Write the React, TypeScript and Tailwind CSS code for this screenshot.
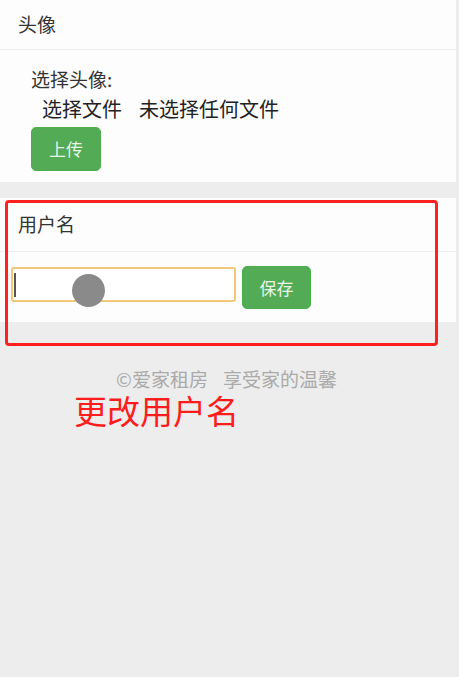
export default function App() {
  return (
    <div
      className="relative min-h-[677px] bg-[#ededed] text-[#333]"
      style={{ fontFamily: '"Noto Sans CJK SC", "Noto Sans", sans-serif' }}
    >
      {/* 头像 panel */}
      <div className="mr-[3px] bg-[#fdfdfd]">
        <div className="flex h-[50px] items-center border-b border-[#eeeeee] pl-[18px] text-[19px]">头像</div>
        <div className="pl-[31px] pt-[15px] pb-[11px]">
          <div className="text-[19px] leading-[28px]">选择头像:</div>
          <div className="mt-[2px] flex gap-[17px] pl-[11px] text-[20px] leading-[28px] text-[#222]">
            <span>选择文件</span>
            <span>未选择任何文件</span>
          </div>
          <button className="mt-[4px] flex h-[44px] w-[70px] items-center justify-center rounded-[5px] border border-[#4cae4c] bg-[#53ab56] text-[17px] text-[#e8f5e8]">
            上传
          </button>
        </div>
      </div>

      {/* 用户名 panel */}
      <div className="mt-[16px] mr-[3px] bg-[#fdfdfd]">
        <div className="flex h-[54px] items-center border-b border-[#eeeeee] pl-[18px] text-[19px]">用户名</div>
        <div className="flex items-start gap-[6px] pl-[11px] pt-[14px] pb-[13px]">
          <div className="mt-[1px] h-[35px] w-[225px] rounded-[3px] border-2 border-[#f1c77a] bg-white">
            <div className="ml-[1px] mt-[4px] h-[24px] w-[2px] bg-[#555]" />
          </div>
          <button className="flex h-[43px] w-[69px] items-center justify-center rounded-[5px] border border-[#4cae4c] bg-[#53ab56] text-[17px] text-[#e8f5e8]">
            保存
          </button>
        </div>
      </div>

      <div className="mt-[45px] flex justify-center gap-[15px] text-[19px] leading-[23px] text-[#aaaaaa]">
        <span className="-ml-[6px]">©爱家租房</span>
        <span>享受家的温馨</span>
      </div>
      <div className="mt-[3px] pl-[74px] text-[33px] leading-[34px] text-[#ff1c1c]">更改用户名</div>

      {/* annotation box */}
      <div className="absolute left-[5px] top-[200px] h-[146px] w-[433px] rounded-[4px] border-[3px] border-[#ff2020]" />
      {/* touch indicator */}
      <div className="absolute left-[72px] top-[274px] h-[33px] w-[33px] rounded-full bg-[#8a8a8a]" />
    </div>
  );
}
